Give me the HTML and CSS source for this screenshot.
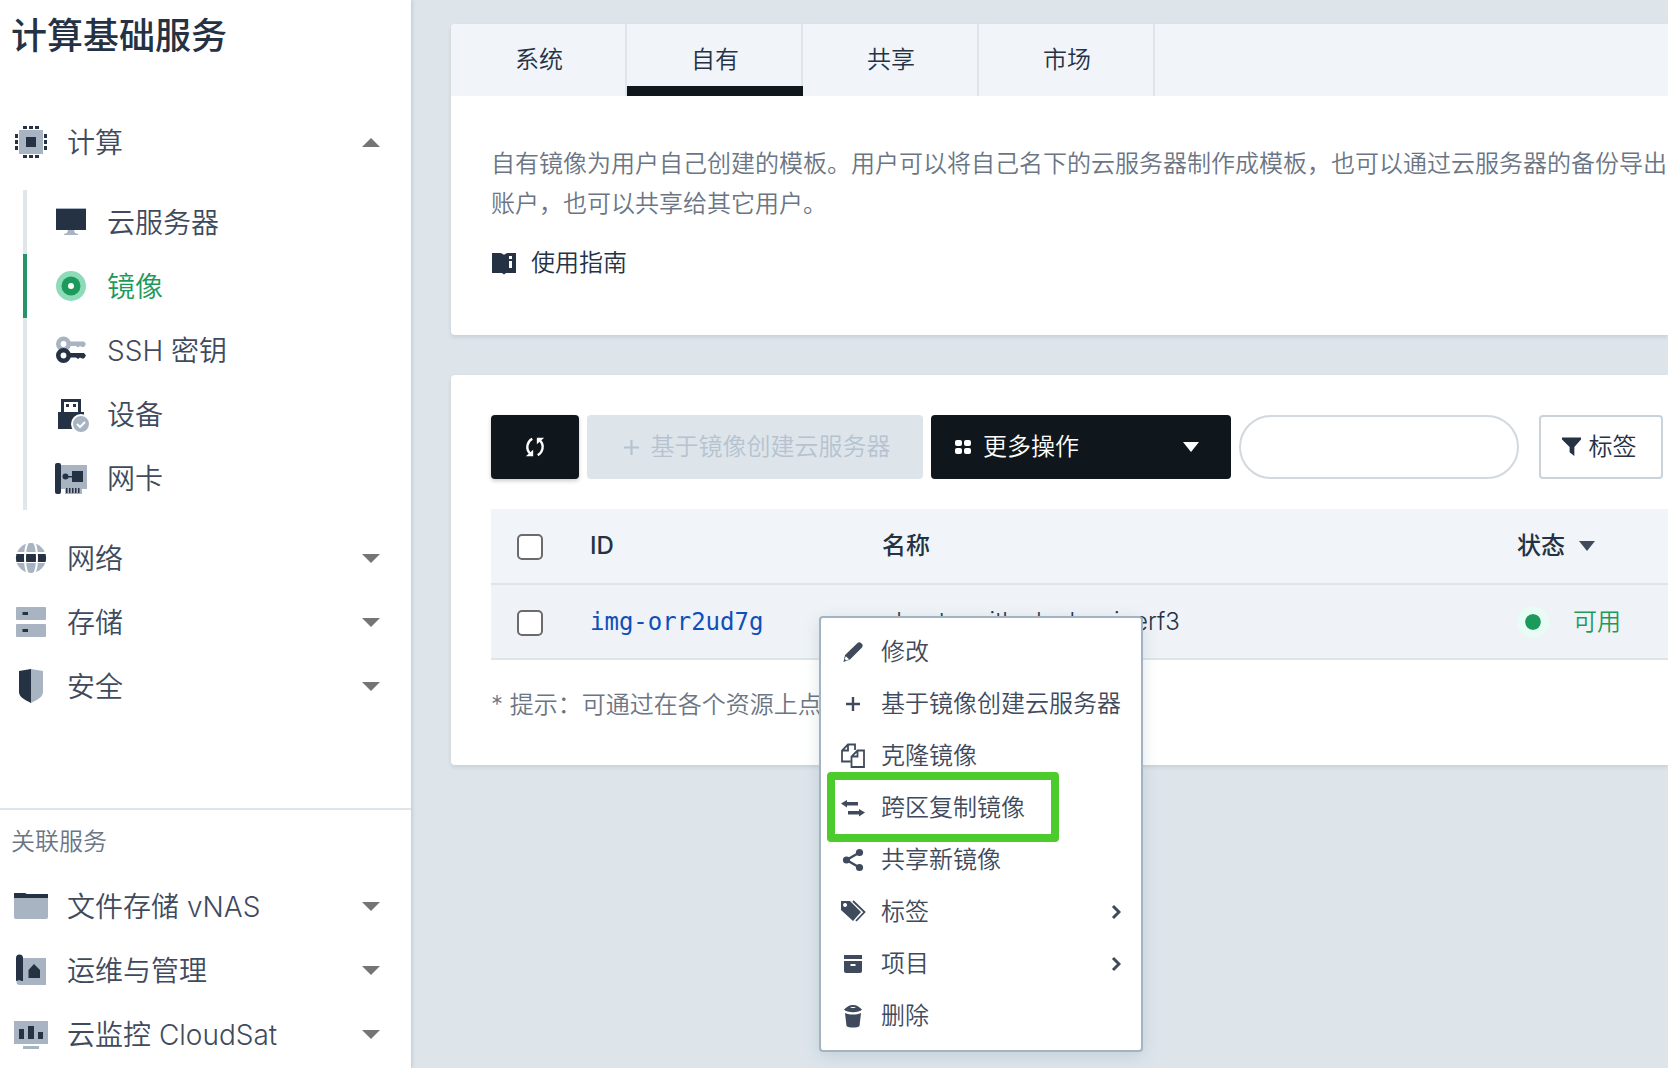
FILE: index.html
```html
<!DOCTYPE html>
<html lang="zh-CN">
<head>
<meta charset="utf-8">
<meta name="viewport" content="width=device-width, initial-scale=1">
<title>计算基础服务</title>
<link rel="stylesheet" href="styles.css">
</head>
<body>
<div class="app">
  <aside class="sidebar">
    <h1 class="sidebar-title">计算基础服务</h1>
    <nav class="nav">
      <button class="nav-row" type="button" aria-expanded="true">
        <svg class="nav-icon" viewBox="0 0 34 34"><path class="lt" d="M5 5h24v24H5z"/><path class="dk" d="M12 12h10v10H12zM9 1h4v3H9zM15 1h4v3h-4zM21 1h4v3h-4zM9 30h4v3H9zM15 30h4v3h-4zM21 30h4v3h-4zM1 9h3v4H1zM1 15h3v4H1zM1 21h3v4H1zM30 9h3v4h-3zM30 15h3v4h-3zM30 21h3v4h-3z"/></svg>
        <span>计算</span><i class="caret caret-up"></i>
      </button>
      <ul class="subnav">
        <li><a class="subnav-row" href="#">
          <svg class="nav-icon" viewBox="0 0 34 34"><path class="dk" d="M2 4h30v21H2z"/><path class="lt" d="M2 3h30v1H2zM14 25h6l1 3 3 1v1H10v-1l3-1z"/></svg>
          <span>云服务器</span></a></li>
        <li><a class="subnav-row is-active" href="#">
          <svg class="nav-icon" viewBox="0 0 34 34"><circle cx="17" cy="17" r="15" fill="#8edbb9"/><circle cx="17" cy="17" r="9.5" fill="#1c9a5c"/><circle cx="17" cy="17" r="3" fill="#fff"/></svg>
          <span>镜像</span></a></li>
        <li><a class="subnav-row" href="#">
          <svg class="nav-icon" viewBox="0 0 34 34"><g fill="none" stroke-width="4.6"><circle cx="9.5" cy="11" r="5.2" stroke="#a8b4c1"/><circle cx="9.5" cy="22.5" r="5.2" stroke="#243244"/></g><path class="lt" d="M15 8.5h15l2 2.5-2 3h-2l-2-1-2 1.500-2-1.500h-7z"/><path class="dk" d="M15 20h15l2 2.500-2 3h-2l-2-1-2 1.500-2-1.500h-7z"/></svg>
          <span>SSH 密钥</span></a></li>
        <li><a class="subnav-row" href="#">
          <svg class="nav-icon" viewBox="0 0 34 34"><path class="dk" d="M7 2h20v13h3v17H4V15h3z"/><path fill="#fff" d="M10 5h14v10H10z"/><path class="dk" d="M12 7h3v3h-3zM19 7h3v3h-3z"/><circle cx="27" cy="27" r="9" fill="#a8b4c1" stroke="#fff" stroke-width="2"/><path d="M23 27l3 3 5-5" fill="none" stroke="#fff" stroke-width="2"/></svg>
          <span>设备</span></a></li>
        <li><a class="subnav-row" href="#">
          <svg class="nav-icon" viewBox="0 0 34 34"><path class="lt" d="M5 4h28v24h-5v5H11v-5H5z"/><rect class="dk" x="1" y="2" width="6" height="31" rx="2"/><path class="dk" d="M18 10h11v11H18zM11 15h8v1.500h-8zM12 27h1.500v5H12zM15 27h1.500v5H15zM18 27h1.500v5H18zM21 27h1.500v5H21zM24 27h1.500v5H24z"/><circle class="dk" cx="11.500" cy="15.500" r="3"/></svg>
          <span>网卡</span></a></li>
      </ul>
      <button class="nav-row" type="button" aria-expanded="false">
        <svg class="nav-icon" viewBox="0 0 34 34"><circle class="lt" cx="17" cy="17" r="15"/><path fill="#fff" d="M1 11h32v11H1z"/><path class="dk" d="M2.400 13h29.200a15 15 0 0 1 0 8H2.400a15 15 0 0 1 0-8z"/><path d="M14 1C10 8 10 26 14 33M20 1C24 8 24 26 20 33" fill="none" stroke="#fff" stroke-width="2"/></svg>
        <span>网络</span><i class="caret"></i>
      </button>
      <button class="nav-row" type="button" aria-expanded="false">
        <svg class="nav-icon" viewBox="0 0 34 34"><rect class="lt" x="2" y="2" width="30" height="13" rx="1"/><rect class="lt" x="2" y="19" width="30" height="13" rx="1"/><path class="dk" d="M8.500 7H14v3H8.500zM8.500 24H14v3H8.500z"/></svg>
        <span>存储</span><i class="caret"></i>
      </button>
      <button class="nav-row" type="button" aria-expanded="false">
        <svg class="nav-icon" viewBox="0 0 34 34"><path class="dk" d="M17 0v34C11 31 5 28 5 23V2z"/><path class="lt" d="M17 0v34c6-3 12-6 12-11V2z"/></svg>
        <span>安全</span><i class="caret"></i>
      </button>
    </nav>
    <section class="related">
      <h2 class="related-title">关联服务</h2>
      <button class="nav-row" type="button" aria-expanded="false">
        <svg class="nav-icon" viewBox="0 0 34 34"><path class="lt" d="M0 8h34v20a2 2 0 0 1-2 2H2a2 2 0 0 1-2-2z"/><path class="dk" d="M0 4h11l2 1h21v4H0z"/></svg>
        <span>文件存储 vNAS</span><i class="caret"></i>
      </button>
      <button class="nav-row" type="button" aria-expanded="false">
        <svg class="nav-icon" viewBox="0 0 34 34"><path class="lt" d="M6 5h26v27H6z"/><circle class="lt" cx="5.500" cy="29" r="3"/><path class="dk" d="M2 5a3.500 3.500 0 0 1 7 0v23H7l-1-1-4 1zM14.500 25v-8L20 11l6 6v8z"/></svg>
        <span>运维与管理</span><i class="caret"></i>
      </button>
      <button class="nav-row" type="button" aria-expanded="false">
        <svg class="nav-icon" viewBox="0 0 34 34"><path class="lt" d="M0 4h34v23H0zM9 29h16v3H9z"/><path class="dk" d="M5 12h5v10H5zM14 9h6v13h-6zM24 15h5v7h-5z"/></svg>
        <span>云监控 CloudSat</span><i class="caret"></i>
      </button>
    </section>
  </aside>

  <main class="main">
    <section class="card">
      <div class="tabs" role="tablist">
        <button class="tab" type="button" role="tab">系统</button>
        <button class="tab is-active" type="button" role="tab" aria-selected="true">自有</button>
        <button class="tab" type="button" role="tab">共享</button>
        <button class="tab" type="button" role="tab">市场</button>
      </div>
      <div class="intro">
        <p class="intro-text">自有镜像为用户自己创建的模板。用户可以将自己名下的云服务器制作成模板，也可以通过云服务器的备份导出<br>账户，也可以共享给其它用户。</p>
        <a class="guide" href="#"><svg class="guide-icon" viewBox="0 0 24 24"><path fill="#243244" d="M0 2h8c2 0 3 1 4 2 1-1 2-2 4-2h8v20H14l-2 1.500-2-1.500H0z"/><path fill="#fff" d="M17 5h3v3h-3zM17 10h3v7h-3z"/></svg>使用指南</a>
      </div>
    </section>

    <section class="card list-card">
      <div class="toolbar">
        <button class="btn btn-dark btn-refresh" type="button" aria-label="刷新"><svg class="refresh-icon" viewBox="0 0 24 24"><path d="M9 3C3.500 6 1.500 14 6.500 19M15 21C20.500 18 22.500 10 17.500 5" fill="none" stroke="#fff" stroke-width="2.600"/><path fill="#fff" d="M2 22h8v-7zM22 2h-8v7z"/></svg></button>
        <button class="btn btn-create" type="button" disabled><svg class="plus-icon" viewBox="0 0 14 14"><path d="M7 0v14M0 7h14" stroke="currentColor" stroke-width="2"/></svg>基于镜像创建云服务器</button>
        <button class="btn btn-dark btn-more" type="button"><svg class="grid-icon" viewBox="0 0 16 16"><g fill="#fff"><rect y="1" width="7" height="6" rx="2"/><rect x="9" y="1" width="7" height="6" rx="2"/><rect y="9" width="7" height="6" rx="2"/><rect x="9" y="9" width="7" height="6" rx="2"/></g></svg>更多操作<i class="sort-caret push"></i></button>
        <input class="search" type="search" aria-label="搜索">
        <button class="btn btn-tag" type="button"><svg class="funnel-icon" viewBox="0 0 20 20"><path fill="#243244" d="M0 0h20v2l-7 8v9.500l-5-4V10L0 2z"/></svg>标签</button>
      </div>
      <table class="table">
        <thead>
          <tr>
            <th class="col-check"><input class="check" type="checkbox" aria-label="全选"></th>
            <th class="col-id">ID</th>
            <th class="col-name">名称</th>
            <th><span class="sortable">状态<i class="sort-caret"></i></span></th>
          </tr>
        </thead>
        <tbody>
          <tr>
            <td class="col-check"><input class="check" type="checkbox" aria-label="选择 img-orr2ud7g"></td>
            <td><a class="res-id" href="#">img-orr2ud7g</a></td>
            <td>ubuntu-with-docker-iperf3</td>
            <td><span class="status"><i class="dot"></i>可用</span></td>
          </tr>
        </tbody>
      </table>
      <p class="hint">* 提示：可通过在各个资源上点击右键来进行操作</p>
    </section>

    <ul class="menu" role="menu">
      <li><button class="menu-item" type="button" role="menuitem"><svg class="menu-icon" viewBox="0 0 26 26"><path fill="#3f4b5d" d="M17 4.500c1.500-1.500 3-1.500 4-.500l1 1c1 1 1 2.500-.500 4L10 20.500l-6.500 2.500L5 16z"/><path fill="#fff" d="M5.800 17.200l3.400 3-3 1.300-1.500-1.400z"/></svg>修改</button></li>
      <li><button class="menu-item" type="button" role="menuitem"><svg class="menu-icon" viewBox="0 0 26 26"><path d="M13 6v14M6 13h14" stroke="#3f4b5d" stroke-width="2.400"/></svg>基于镜像创建云服务器</button></li>
      <li><button class="menu-item" type="button" role="menuitem"><svg class="menu-icon" viewBox="0 0 26 26"><path d="M10.500 18.500H2V7.500L8 1.500h7V7M8 1.500v6H2M17.500 7.500H24v16.500H11.500V13.500zM17.500 7.500v6h-6" fill="none" stroke="#3f4b5d" stroke-width="1.800"/></svg>克隆镜像</button></li>
      <li class="marked"><button class="menu-item" type="button" role="menuitem"><svg class="menu-icon" viewBox="0 0 26 26"><path fill="#3f4b5d" d="M1 8.500L7 5v2h11v3.500H7V12.500zM25 17.500L19 14v2H8v3.500h11v2z"/></svg>跨区复制镜像</button></li>
      <li><button class="menu-item" type="button" role="menuitem"><svg class="menu-icon" viewBox="0 0 26 26"><g fill="#3f4b5d"><circle cx="6.500" cy="13" r="3.600"/><circle cx="19.500" cy="5.500" r="3.600"/><circle cx="19.500" cy="20.500" r="3.600"/></g><path d="M19.500 5.500L6.500 13l13 7.500" fill="none" stroke="#3f4b5d" stroke-width="2.400"/></svg>共享新镜像</button></li>
      <li><button class="menu-item" type="button" role="menuitem"><svg class="menu-icon" viewBox="0 0 26 26"><path fill="#3f4b5d" fill-rule="evenodd" d="M1 2h9l11 11-8 9L1 11zM5 4a2 2 0 1 0 .1 0z"/><path d="M13 2l11.500 11L16 22" fill="none" stroke="#3f4b5d" stroke-width="1.800"/></svg>标签<svg class="chevron" viewBox="0 0 10 16"><path d="M2 2l6 6-6 6" fill="none" stroke="#3f4b5d" stroke-width="3"/></svg></button></li>
      <li><button class="menu-item" type="button" role="menuitem"><svg class="menu-icon" viewBox="0 0 26 26"><path fill="#3f4b5d" fill-rule="evenodd" d="M4 4h18v4H4zM4 10h18v10a2 2 0 0 1-2 2H6a2 2 0 0 1-2-2zM10.500 13v2h5v-2z"/></svg>项目<svg class="chevron" viewBox="0 0 10 16"><path d="M2 2l6 6-6 6" fill="none" stroke="#3f4b5d" stroke-width="3"/></svg></button></li>
      <li><button class="menu-item" type="button" role="menuitem"><svg class="menu-icon" viewBox="0 0 26 26"><path fill="#3f4b5d" d="M5 10c5 2 11 2 16 0l-1.500 13c-2 2-11 2-13 0z"/><path fill="#3f4b5d" fill-rule="evenodd" d="M4 6.500C7 4 9 2 13 2s6 2 9 4.500C19 10 7 10 4 6.500zM10 5h6c-1-1.500-5-1.500-6 0z"/></svg>删除</button></li>
    </ul>
  </main>
</div>
</body>
</html>
```

FILE: styles.css
```css
*, *::before, *::after { box-sizing: border-box; }

body {
  margin: 0;
  background: #dde5eb;
  color: #243244;
  font-family: Inter, "Noto Sans CJK SC", sans-serif;
  font-size: 24px;
  font-weight: 350;
  line-height: 40px;
  overflow-x: hidden;
}

button, input { font: inherit; color: inherit; }
button { border: 0; background: none; padding: 0; cursor: pointer; }
a { color: inherit; text-decoration: none; }
ul { list-style: none; margin: 0; padding: 0; }
h1, h2, p { margin: 0; }
svg { display: block; flex: none; }

.dk { fill: #243244; }
.lt { fill: #a8b4c1; }

.app { display: flex; min-height: 100vh; }

/* Sidebar */
.sidebar {
  flex: none;
  width: 411px;
  background: #fff;
  box-shadow: 1px 0 4px rgba(60, 80, 90, 0.2);
}
.sidebar-title {
  padding: 12px 11px 50px;
  font-size: 36px;
  line-height: 48px;
  font-weight: 500;
}
.nav { min-height: 698px; }
.nav-row, .subnav-row {
  display: flex;
  align-items: center;
  gap: 19px;
  height: 64px;
  font-size: 28px;
  color: #3f4b5d;
  white-space: nowrap;
}
.nav-row { width: 100%; padding: 0 31px 0 14px; }
.nav-row span, .subnav-row span { padding-top: 2px; }
.nav-icon { width: 34px; height: 34px; overflow: visible; }
.caret {
  margin-left: auto;
  border: 9px solid transparent;
  border-top-color: #757575;
  border-bottom: 0;
}
.caret-up {
  border-top: 0;
  border-bottom: 9px solid #757575;
}
.subnav {
  position: relative;
  margin: 16px 0 16px 23px;
}
.subnav-row {
  padding-left: 27px;
  border-left: 4px solid #dfe6ec;
}
.subnav-row.is-active { border-color: #279468; color: #1c9a5c; }
.related { border-top: 2px solid #dde5eb; }
.related-title {
  padding: 12px 11px;
  font-size: 24px;
  font-weight: 350;
  color: #6b7583;
}

/* Main area */
.main {
  position: relative;
  flex: 1;
  min-width: 0;
  display: flex;
  flex-direction: column;
  gap: 40px;
  padding: 24px 0 24px 40px;
}
.card {
  background: #fff;
  border-radius: 4px 0 0 4px;
  box-shadow: 0 2px 4px rgba(40, 50, 60, 0.12);
}
.tabs {
  display: flex;
  height: 72px;
  background: #f1f5f9;
  border-radius: 4px 0 0 0;
}
.tab {
  width: 176px;
  background: linear-gradient(#dfe5ea, #dfe5ea) right / 2px 100% no-repeat;
}
.tab.is-active {
  background:
    linear-gradient(#10171c, #10171c) bottom / 100% 10px no-repeat,
    linear-gradient(#dfe5ea, #dfe5ea) right / 2px 100% no-repeat;
}
.intro { padding: 48px 0 52px 40px; }
.intro-text {
  color: #6b7583;
  white-space: nowrap;
}
.guide {
  display: flex;
  align-items: center;
  gap: 14px;
  margin-top: 19px;
}
.guide-icon { width: 26px; height: 24px; }

.list-card { padding: 40px 0 40px 40px; }
.toolbar { display: flex; gap: 8px; }
.btn {
  display: flex;
  align-items: center;
  justify-content: center;
  height: 64px;
  border-radius: 4px;
  white-space: nowrap;
}
.btn-dark { background: #10171c; color: #fff; }
.btn-refresh { width: 88px; box-shadow: 0 2px 4px rgba(0, 0, 0, 0.2); }
.refresh-icon { width: 22px; height: 24px; }
.btn-create {
  width: 336px;
  padding-left: 4px;
  gap: 12px;
  background: #dde5eb;
  color: #b6c3cf;
}
.plus-icon { width: 15px; height: 15px; }
.btn-more { width: 300px; padding: 0 32px 0 24px; gap: 12px; }
.grid-icon { width: 16px; height: 18px; }
.search {
  width: 280px;
  height: 64px;
  padding: 0 32px;
  border: 2px solid #d2d8de;
  border-radius: 32px;
  background: #fff;
}
.btn-tag {
  width: 124px;
  margin-left: 12px;
  padding-right: 4px;
  gap: 8px;
  border: 2px solid #cbd3da;
}
.funnel-icon { width: 19px; height: 20px; }
.sort-caret {
  border: 8px solid transparent;
  border-top: 10px solid #3f4b5d;
  border-bottom: 0;
}
.push { margin-left: auto; border-top-color: #fff; }

.table {
  width: 100%;
  margin-top: 30px;
  border-collapse: separate;
  border-spacing: 0;
  table-layout: fixed;
}
.table th, .table td {
  height: 75px;
  padding: 0;
  border-bottom: 2px solid #dde4ea;
  text-align: left;
  vertical-align: middle;
}
.table th { height: 76px; background: #f1f5f9; font-weight: 500; }
.table td { background: #eff3f7; }
.table .col-check { width: 99px; padding: 2px 0 0 26px; }
.col-id { width: 292px; }
.col-name { width: 635px; }
.check {
  appearance: none;
  display: block;
  width: 26px;
  height: 26px;
  margin: 0;
  border: 2px solid #6b6b6b;
  border-radius: 5px;
  background: #fff;
}
.res-id { font-family: "DejaVu Sans Mono", monospace; color: #0f4fba; }
.sortable { display: flex; align-items: center; gap: 14px; }
.status {
  display: flex;
  align-items: center;
  gap: 24px;
  color: #1c9a5c;
}
.dot {
  width: 32px;
  height: 32px;
  border: 8px solid #e9fbf5;
  border-radius: 50%;
  background: #1c9a5c;
  background-clip: padding-box;
}
.hint { margin-top: 25px; color: #6b7583; }

/* Context menu */
.menu {
  position: absolute;
  top: 616px;
  left: 408px;
  width: 324px;
  padding: 8px 0;
  border: 2px solid #a3b3c2;
  border-radius: 4px;
  background: #fff;
  box-shadow: 0 4px 16px rgba(90, 120, 140, 0.2);
}
.menu-item {
  display: flex;
  align-items: center;
  gap: 15px;
  width: 100%;
  height: 52px;
  padding: 0 20px 0 19px;
  color: #3f4b5d;
  white-space: nowrap;
}
.menu-icon { width: 26px; height: 26px; }
.chevron { width: 10px; height: 16px; margin-left: auto; }
.marked { position: relative; }
.marked::after {
  content: "";
  position: absolute;
  inset: -10px 82px -8px 6px;
  border: 8px solid #4ccb2c;
  border-radius: 4px;
  pointer-events: none;
}
```
